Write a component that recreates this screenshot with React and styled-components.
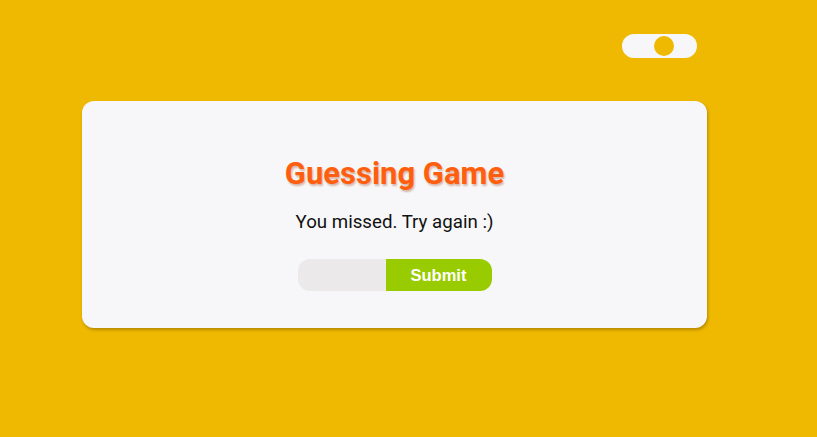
import React from "react";
import styled, { createGlobalStyle } from "styled-components";

const Global = createGlobalStyle`
  html, body { margin: 0; padding: 0; background: #eeb900; }
  body { font-family: Roboto, "Liberation Sans", sans-serif; }
`;

const Page = styled.div`
  width: 817px;
  height: 437px;
  background: #eeb900;
  display: flex;
  flex-direction: column;
`;

const TopBar = styled.div`
  display: flex;
  justify-content: flex-end;
  padding: 34px 120px 0 0;
`;

const Toggle = styled.div`
  width: 75px;
  height: 24px;
  border-radius: 12px;
  background: #f7f7f9;
  display: flex;
  align-items: center;
  justify-content: center;
`;

const Knob = styled.div`
  width: 20px;
  height: 20px;
  border-radius: 50%;
  background: #eeb900;
  margin-left: 9px;
`;

const Card = styled.div`
  margin: 43px 0 0 82px;
  width: 625px;
  height: 227px;
  box-sizing: border-box;
  background: #f7f7f9;
  border-radius: 12px;
  box-shadow: 1px 2px 3px rgba(120, 80, 0, 0.45);
  display: flex;
  flex-direction: column;
  align-items: center;
  padding-top: 55px;
`;

const Title = styled.h1`
  margin: 0;
  font-family: Roboto, sans-serif;
  font-weight: 700;
  font-size: 31px;
  line-height: 36px;
  color: #ff5e0e;
  text-shadow: 1px 2px 2px rgba(150, 60, 20, 0.35);
`;

const Message = styled.p`
  margin: 18px 0 0;
  font-family: Roboto, sans-serif;
  font-size: 18.7px;
  line-height: 24px;
  color: #111;
`;

const Form = styled.form`
  display: flex;
  margin-top: 25px;
  height: 32px;
`;

const Input = styled.input`
  width: 88px;
  height: 32px;
  box-sizing: border-box;
  border: none;
  outline: none;
  background: #ebe9ea;
  border-radius: 12px 0 0 12px;
  padding: 0 10px;
`;

const Button = styled.button`
  width: 106px;
  height: 32px;
  border: none;
  background: #99cc00;
  color: #fff;
  font-family: "Liberation Sans", Arial, sans-serif;
  font-weight: 700;
  font-size: 16.5px;
  border-radius: 0 12px 12px 0;
  padding: 0;
  cursor: pointer;
`;

export default function App() {
  return (
    <>
      <Global />
      <Page>
        <TopBar>
          <Toggle>
            <Knob />
          </Toggle>
        </TopBar>
        <Card>
          <Title>Guessing Game</Title>
          <Message>You missed. Try again :)</Message>
          <Form onSubmit={(e) => e.preventDefault()}>
            <Input type="number" />
            <Button type="submit">Submit</Button>
          </Form>
        </Card>
      </Page>
    </>
  );
}
